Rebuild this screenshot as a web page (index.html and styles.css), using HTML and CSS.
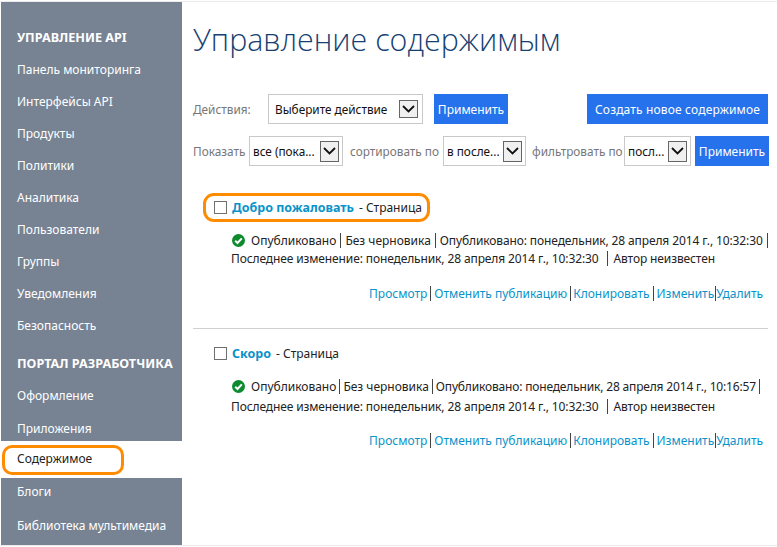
FILE: index.html
```html
<!DOCTYPE html>
<html lang="ru">
<head>
    <meta charset="UTF-8">
    <title>Управление содержимым</title>
    <link rel="stylesheet" href="styles.css">
</head>
<body>

<div class="page">
    <div class="sidebar">
        <div class="nav-head first">УПРАВЛЕНИЕ API</div>
        <a class="nav-item">Панель мониторинга</a>
        <a class="nav-item">Интерфейсы API</a>
        <a class="nav-item">Продукты</a>
        <a class="nav-item">Политики</a>
        <a class="nav-item">Аналитика</a>
        <a class="nav-item">Пользователи</a>
        <a class="nav-item">Группы</a>
        <a class="nav-item">Уведомления</a>
        <a class="nav-item">Безопасность</a>
        <div class="nav-head second">ПОРТАЛ РАЗРАБОТЧИКА</div>
        <a class="nav-item">Оформление</a>
        <a class="nav-item apps">Приложения</a>
        <div class="nav-active"><span class="nav-ring">Содержимое</span></div>
        <a class="nav-item blog">Блоги</a>
        <a class="nav-item media">Библиотека мультимедиа</a>
    </div>

    <div class="main">
        <h1 class="title">Управление содержимым</h1>

        <div class="toolbar actions">
            <span class="label action-label">Действия:</span>
            <div class="select select-action"><span>Выберите действие</span><span class="arrow arrow-small"><svg width="13" height="8" viewBox="0 0 13 8"><path d="M1 1l5.500 5.500 5.500-5.500" fill="none" stroke="#111" stroke-width="1.8"/></svg></span></div>
            <button class="btn">Применить</button>
            <button class="btn btn-create">Создать новое содержимое</button>
        </div>

        <div class="toolbar filters">
            <span class="label label-show">Показать</span>
            <div class="select select-show"><span>все (пока...</span><span class="arrow"><svg width="13" height="8" viewBox="0 0 13 8"><path d="M1 1l5.500 5.500 5.500-5.500" fill="none" stroke="#111" stroke-width="1.8"/></svg></span></div>
            <span class="label label-sort">сортировать по</span>
            <div class="select select-sort"><span>в после...</span><span class="arrow"><svg width="13" height="8" viewBox="0 0 13 8"><path d="M1 1l5.500 5.500 5.500-5.500" fill="none" stroke="#111" stroke-width="1.8"/></svg></span></div>
            <span class="label label-filter">фильтровать по</span>
            <div class="select select-filter"><span>посл...</span><span class="arrow"><svg width="13" height="8" viewBox="0 0 13 8"><path d="M1 1l5.500 5.500 5.500-5.500" fill="none" stroke="#111" stroke-width="1.8"/></svg></span></div>
            <button class="btn btn-last">Применить</button>
        </div>

        <div class="entry entry-first">
            <div class="entry-title ring">
                <span class="check"></span>
                <a class="entry-link">Добро пожаловать</a>
                <span class="entry-type">- Страница</span>
            </div>
            <div class="entry-info">
                <div class="info-line">
                    <svg class="ok" width="13" height="13" viewBox="0 0 13 13"><circle cx="6.500" cy="6.500" r="6.500" fill="#0e8a2f"/><path d="M3.200 6.700l2.300 2.300 4.300-4.600" fill="none" stroke="#fff" stroke-width="2"/></svg>
                    <span><span class="plain">Опубликовано</span><i class="sep"></i><span class="plain">Без черновика</span><i class="sep"></i>Опубликовано: понедельник, 28 апреля 2014 г., 10:32:30<i class="sep"></i></span>
                </div>
                <div class="info-line">Последнее изменение: понедельник, 28 апреля 2014 г., 10:32:30<i class="sep sep-author"></i>Автор неизвестен</div>
            </div>
            <div class="links">
                <a>Просмотр</a><i class="sep"></i><a>Отменить публикацию</a><i class="sep"></i><a>Клонировать</a><i class="sep"></i><a>Изменить</a><i class="sep sep-narrow"></i><a>Удалить</a>
            </div>
        </div>

        <div class="entry entry-second">
            <div class="entry-title">
                <span class="check"></span>
                <a class="entry-link">Скоро</a>
                <span class="entry-type">- Страница</span>
            </div>
            <div class="entry-info">
                <div class="info-line">
                    <svg class="ok" width="13" height="13" viewBox="0 0 13 13"><circle cx="6.500" cy="6.500" r="6.500" fill="#0e8a2f"/><path d="M3.200 6.700l2.300 2.300 4.300-4.600" fill="none" stroke="#fff" stroke-width="2"/></svg>
                    <span class="tight"><span class="plain">Опубликовано</span><i class="sep"></i><span class="plain">Без черновика</span><i class="sep"></i>Опубликовано: понедельник, 28 апреля 2014 г., 10:16:57<i class="sep"></i></span>
                </div>
                <div class="info-line">Последнее изменение: понедельник, 28 апреля 2014 г., 10:32:30<i class="sep sep-author"></i>Автор неизвестен</div>
            </div>
            <div class="links">
                <a>Просмотр</a><i class="sep"></i><a>Отменить публикацию</a><i class="sep"></i><a>Клонировать</a><i class="sep"></i><a>Изменить</a><i class="sep sep-narrow"></i><a>Удалить</a>
            </div>
        </div>
    </div>
</div>

</body>
</html>
```

FILE: styles.css
```css
html, body {
    margin: 0;
    padding: 0;
}
body {
    width: 777px;
    height: 547px;
    overflow: hidden;
    background-color: #fff;
    font-family: "Noto Sans", "Open Sans", sans-serif;
    font-size: 12px;
    color: #222;
}
.page {
    display: flex;
    box-sizing: border-box;
    height: 545px;
    margin-top: 1px;
    padding-left: 1px;
    border-top: 1px solid #ececec;
    border-bottom: 1px solid #ececec;
}

/* sidebar */
.sidebar {
    width: 181px;
    flex-shrink: 0;
    display: flex;
    flex-direction: column;
    background-color: #778393;
    color: #fff;
}
.nav-head {
    height: 32px;
    line-height: 32px;
    padding-left: 16px;
    font-weight: bold;
    font-size: 12.6px;
    white-space: nowrap;
}
.nav-head.first {
    margin-top: 20px;
}
.nav-head.second {
    margin-top: 6px;
}
.nav-item {
    height: 32px;
    line-height: 32px;
    padding-left: 16px;
    white-space: nowrap;
}
.nav-item.apps {
    height: 29px;
    line-height: 34px;
}
.nav-item.blog {
    line-height: 28px;
}
.nav-item.media {
    height: 35px;
}
.nav-active {
    height: 37px;
    background-color: #fff;
    color: #222;
    display: flex;
    align-items: center;
    padding-left: 1px;
}
.nav-ring {
    box-sizing: border-box;
    width: 122px;
    height: 30px;
    line-height: 22px;
    padding-left: 12px;
    border: 3px solid #ff8c00;
    border-radius: 10px;
}

/* main */
.main {
    flex: 1;
    padding: 0 9px 0 11px;
    min-width: 0;
}
.title {
    margin: 15px 0 0;
    height: 45px;
    line-height: 45px;
    font-family: "Open Sans", sans-serif;
    font-weight: 300;
    font-size: 30.4px;
    color: #173f72;
    white-space: nowrap;
}
.toolbar {
    display: flex;
    align-items: center;
    white-space: nowrap;
    font-size: 11.8px;
}
.actions {
    margin-top: 32px;
    height: 30px;
}
.filters {
    margin-top: 12px;
    height: 30px;
}
.label {
    color: #777;
}
.action-label {
    width: 75px;
}
.label-show {
    width: 56px;
}
.label-sort {
    width: 93px;
    margin-left: 7px;
}
.label-filter {
    width: 92px;
    margin-left: 6px;
}
.select {
    box-sizing: border-box;
    height: 30px;
    border: 1px solid #c9c9c9;
    display: flex;
    align-items: center;
    justify-content: space-between;
    padding: 0 3px;
    color: #111;
}
.select-action {
    width: 155px;
    padding: 0 4px 0 6px;
    margin-right: 11px;
}
.select-show {
    width: 94px;
}
.select-sort {
    width: 83px;
}
.select-filter {
    width: 67px;
}
.arrow {
    box-sizing: border-box;
    width: 19px;
    height: 21px;
    border: 1px solid #666;
    background-color: #f0f0f0;
    display: flex;
    align-items: center;
    justify-content: center;
}
.arrow-small {
    height: 18px;
}
.btn {
    height: 30px;
    border: none;
    padding: 0;
    width: 74px;
    background-color: #2672ec;
    color: #fff;
    font-family: inherit;
    font-size: 12px;
}
.btn-create {
    width: 181px;
    margin-left: auto;
    letter-spacing: 0.16px;
}
.btn-last {
    margin-left: 4px;
    margin-right: -1px;
}

/* entries */
.entry-first {
    margin-top: 27px;
    border-bottom: 1px solid #d0d0d0;
    height: 135px;
}
.entry-second {
    padding-top: 11px;
}
.entry-title {
    display: flex;
    align-items: center;
    height: 27px;
    padding-left: 21px;
    gap: 5px;
    white-space: nowrap;
}
.entry-title.ring {
    box-sizing: border-box;
    width: 227px;
    height: 29px;
    margin-left: 10px;
    padding-left: 8px;
    border: 3px solid #ff8c00;
    border-radius: 11px;
}
.check {
    box-sizing: border-box;
    width: 13px;
    height: 13px;
    border: 1px solid #707070;
    background-color: #fff;
}
.entry-link {
    color: #0a93c9;
    font-weight: bold;
    font-size: 12.5px;
}
.entry-type {
    font-size: 12px;
}
.entry-info {
    margin-top: 9px;
    padding-left: 38px;
}
.info-line {
    display: flex;
    align-items: center;
    height: 18px;
    white-space: nowrap;
    letter-spacing: -0.12px;
}
.entry-second .info-line {
    height: 20px;
}
.ok {
    flex-shrink: 0;
    margin: 0 6px 0 1px;
}
.plain {
    letter-spacing: 0;
}
.tight {
    letter-spacing: -0.17px;
}
.sep {
    display: inline-block;
    width: 1px;
    height: 15px;
    margin: 0 4px;
    background-color: #444;
    vertical-align: -3px;
}
.sep-author {
    margin: 0 6px 0 8px;
}
.entry-second .info-line .sep {
    margin: 0 3px;
}
.entry-second .info-line .sep-author {
    margin: 0 6px 0 8px;
}
.links {
    margin-top: 18px;
    height: 18px;
    line-height: 18px;
    text-align: right;
    color: #0a93c9;
    padding-right: 5px;
    white-space: nowrap;
}
.links .sep {
    margin: 0 3px;
}
.links .sep:nth-of-type(2) {
    margin: 0 2.5px;
}
.links .sep-narrow {
    margin: 0 0.5px;
}
.entry-second .links {
    margin-top: 16px;
}
```
